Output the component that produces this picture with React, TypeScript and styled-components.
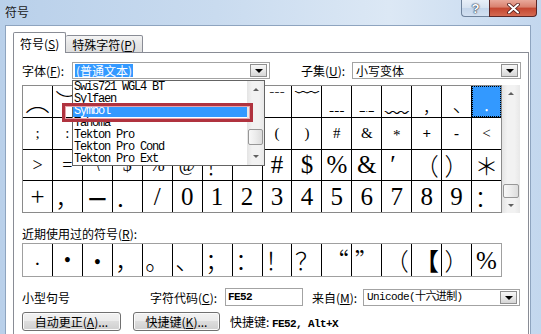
import styled, { createGlobalStyle } from "styled-components";

type Kind = "lg" | "md" | "sm" | "cjk" | "dash";
type Glyph = { t: string; k: Kind; h?: "flex-start" | "center" | "flex-end"; dy?: number; sel?: boolean; bold?: boolean };

const g = (t: string, k: Kind = "lg", extra: Partial<Glyph> = {}): Glyph => ({ t, k, ...extra });

const FAMILY: Record<Kind, string> = {
    lg: `"Liberation Serif", serif`,
    md: `"Liberation Serif", serif`,
    sm: `"Liberation Serif", serif`,
    cjk: `"Noto Sans CJK SC", sans-serif`,
    dash: `"Noto Sans CJK SC", sans-serif`,
};
const SIZE: Record<Kind, number> = { lg: 25, md: 18, sm: 15, cjk: 24, dash: 20 };

const SYMBOL_ROWS: Glyph[][] = [
    [
        g("︵", "cjk"), g("︶", "cjk"), g("﹃", "cjk"), g("﹄", "cjk"), g("﹅", "cjk"), g("﹆", "cjk"),
        g("﹇", "cjk"), g("﹈", "cjk"), g("﹉", "cjk"), g("﹋", "cjk"), g("﹍", "cjk"), g("﹎", "cjk"),
        g("﹏", "cjk"), g("﹐", "cjk"), g("﹑", "cjk"), g("﹒", "cjk", { sel: true }),
    ],
    [
        g(";", "sm"), g(":", "sm"), g("﹖", "sm"), g("﹗", "sm"), g("﹘", "sm"), g("﹛", "sm"),
        g("﹜", "sm"), g("﹝", "sm"), g("(", "sm"), g(")", "sm"), g("#", "sm"), g("&", "sm"),
        g("*", "sm", { dy: 5 }), g("+", "sm", { bold: true }), g("-", "sm", { bold: true }), g("<", "sm"),
    ],
    [
        g(">", "md"), g("=", "md"), g("\\", "md"), g("$", "md"), g("%", "md"), g("@", "md"),
        g("！", "cjk"), g(""), g("#"), g("$"), g("%"), g("&"),
        g("′", "lg", { h: "flex-start" }), g("（", "cjk"), g("）", "cjk"), g("＊", "cjk"),
    ],
    [
        g("+"), g("，", "cjk"), g("—", "dash", { bold: true }), g("．", "cjk"), g("/"),
        g("0"), g("1"), g("2"), g("3"), g("4"), g("5"), g("6"), g("7"), g("8"), g("9"),
        g("：", "cjk"),
    ],
];

const RECENT: Glyph[] = [
    g(".", "sm", { bold: true }), g("•", "md", { bold: true }), g("•", "md", { bold: true, dy: 4 }), g("，", "cjk"),
    g("。", "cjk"), g("、", "cjk"), g("；", "cjk"), g("：", "cjk"), g("！", "cjk"), g("？", "cjk"),
    g("“", "cjk"), g("”", "cjk"), g("（", "cjk"), g("【", "cjk", { bold: true }), g("）", "cjk"), g("%"),
];

const FONTS = ["Swis721 WGL4 BT", "Sylfaen", "Symbol", "Tahoma", "Tekton Pro", "Tekton Pro Cond", "Tekton Pro Ext"];

const GlobalStyle = createGlobalStyle`
    html, body { margin: 0; padding: 0; background: #fff; }
    body {
        font-family: "Noto Sans CJK SC", "Liberation Sans", sans-serif;
        font-size: 12px;
        color: #000;
    }
`;

const Window = styled.div`
    width: 541px;
    height: 334px;
    overflow: hidden;
    display: flex;
    flex-direction: column;
    background: linear-gradient(90deg, #b9d0ea 0%, #c9dbef 40%, #dce8f5 72%, #c3d7ee 100%);
`;

const TitleBar = styled.div`
    height: 25px;
    flex: none;
    display: flex;
    align-items: flex-start;
`;

const TitleText = styled.div`
    padding: 5px 0 0 5px;
    font-size: 12px;
    line-height: 14px;
    color: #1a1a1a;
`;

const Caption = styled.div`
    margin-left: auto;
    margin-right: 4px;
    display: flex;
`;

const HelpButton = styled.div`
    width: 28px;
    height: 17px;
    box-sizing: border-box;
    border: 1px solid #6f839c;
    border-top: none;
    border-right: none;
    border-radius: 0 0 0 4px;
    background: linear-gradient(#e8eff8, #d6e2f0 50%, #c4d5ea 51%, #d2e0f1);
    display: flex;
    align-items: center;
    justify-content: center;
    color: #fff;
    font: bold 13px "Liberation Sans", sans-serif;
    text-shadow: 0 0 1px #2d3d55, 0 0 1px #2d3d55, 0 0 2px #2d3d55;
`;

const CloseButton = styled.div`
    width: 48px;
    height: 17px;
    box-sizing: border-box;
    border: 1px solid #5a2626;
    border-top: none;
    border-radius: 0 0 4px 0;
    background: linear-gradient(#e9a99b, #d9806d 45%, #c4452f 50%, #d46a52);
    display: flex;
    align-items: center;
    justify-content: center;
`;

const Frame = styled.div`
    flex: 1;
    min-height: 0;
    display: flex;
    padding: 0 10px 0 5px;
`;

const Client = styled.div`
    flex: 1;
    min-height: 0;
    background: #fff;
    border: 1px solid #8ea4bf;
    border-bottom: none;
    padding: 6px 1px 0 7px;
    display: flex;
    flex-direction: column;
`;

const TabStrip = styled.div`
    display: flex;
    align-items: flex-end;
    height: 21px;
    margin-bottom: -1px;
    position: relative;
    z-index: 1;
`;

const Tab = styled.div<{ $active: boolean }>`
    height: ${({ $active }) => ($active ? 21 : 18)}px;
    box-sizing: border-box;
    padding: 0 6px;
    border: 1px solid #898c95;
    border-left: ${({ $active }) => ($active ? "1px solid #898c95" : "none")};
    border-bottom: ${({ $active }) => ($active ? "none" : "1px solid #898c95")};
    border-radius: 2px 2px 0 0;
    background: ${({ $active }) => ($active ? "#fff" : "linear-gradient(#f4f4f4, #e6e6e6 50%, #dedede)")};
    display: flex;
    align-items: center;
    font-size: 12px;
    white-space: nowrap;
`;

const Key = styled.span`
    text-decoration: underline;
`;

const Pane = styled.div`
    flex: 1;
    border: 1px solid #898c95;
    border-bottom: none;
    background: #fff;
    padding: 9px 7px 0 8px;
    display: flex;
    flex-direction: column;
`;

const FieldRow = styled.div<{ $h: number; $top: number }>`
    display: flex;
    align-items: center;
    height: ${({ $h }) => $h}px;
    margin-top: ${({ $top }) => $top}px;
    flex: none;
`;

const FieldLabel = styled.span<{ $w: number; $push?: boolean }>`
    width: ${({ $w }) => $w}px;
    flex: none;
    margin-left: ${({ $push }) => ($push ? "auto" : "0")};
    font-size: 12px;
    line-height: 17px;
    white-space: nowrap;
`;

const Combo = styled.div<{ $w: number }>`
    position: relative;
    width: ${({ $w }) => $w}px;
    height: 17px;
    box-sizing: border-box;
    flex: none;
    border: 1px solid #a3a3a3;
    background: #fff;
    display: flex;
    align-items: center;
    padding: 0 2px 0 2px;
`;

const ComboText = styled.span<{ $hl?: boolean; $mono?: boolean }>`
    padding: 0 1px;
    line-height: 13px;
    background: ${({ $hl }) => ($hl ? "#3399ff" : "transparent")};
    color: ${({ $hl }) => ($hl ? "#fff" : "#000")};
    font-family: ${({ $mono }) =>
        $mono ? `"Liberation Mono", "Noto Sans CJK SC", monospace` : `"Noto Sans CJK SC", sans-serif`};
    font-size: ${({ $mono }) => ($mono ? 11 : 12)}px;
    letter-spacing: ${({ $mono }) => ($mono ? "-0.6px" : "0")};
    white-space: nowrap;
`;

const DropButton = styled.span`
    margin-left: auto;
    width: 17px;
    height: 13px;
    box-sizing: border-box;
    border: 1px solid #8f8f8f;
    background: linear-gradient(#f7f7f7, #e8e8e8 50%, #d6d6d6);
    display: flex;
    align-items: center;
    justify-content: center;
    &::after {
        content: "";
        border-left: 4px solid transparent;
        border-right: 4px solid transparent;
        border-top: 4px solid #000;
        margin-top: 1px;
    }
`;

const DropList = styled.div`
    position: absolute;
    top: 17px;
    left: -1px;
    width: 193px;
    height: 86px;
    box-sizing: border-box;
    border: 1px solid #646464;
    background: #fff;
    z-index: 5;
    display: flex;
`;

const ListItems = styled.div`
    flex: 1;
    display: flex;
    flex-direction: column;
`;

const ListItem = styled.div<{ $sel: boolean }>`
    height: 12px;
    line-height: 12px;
    padding-left: 1px;
    font-family: "Liberation Mono", monospace;
    font-size: 12px;
    letter-spacing: -1.2px;
    white-space: nowrap;
    background: ${({ $sel }) => ($sel ? "#3399ff" : "transparent")};
    color: ${({ $sel }) => ($sel ? "#fff" : "#000")};
`;

const Annotation = styled.div`
    position: absolute;
    left: -11px;
    top: 22px;
    width: 191px;
    height: 19px;
    box-sizing: border-box;
    border: 3px solid #b0333f;
    box-shadow: inset 0 0 0 1px #e7a3aa;
    pointer-events: none;
`;

const ScrollBar = styled.div<{ $w: number }>`
    width: ${({ $w }) => $w}px;
    flex: none;
    background: linear-gradient(90deg, #e4e4e4, #f2f2f2 30%, #f2f2f2 70%, #e8e8e8);
    display: flex;
    flex-direction: column;
`;

const ScrollArrow = styled.div<{ $h: number; $down?: boolean }>`
    height: ${({ $h }) => $h}px;
    flex: none;
    display: flex;
    align-items: center;
    justify-content: center;
    &::after {
        content: "";
        border-left: 3px solid transparent;
        border-right: 3px solid transparent;
        ${({ $down }) => ($down ? "border-top: 3px solid #606060;" : "border-bottom: 3px solid #606060;")}
    }
`;

const ScrollGap = styled.div<{ $h?: number }>`
    height: ${({ $h }) => ($h ? `${$h}px` : "auto")};
    flex: ${({ $h }) => ($h ? "none" : "1")};
`;

const Thumb = styled.div<{ $h: number }>`
    height: ${({ $h }) => $h}px;
    flex: none;
    margin: 0 1px;
    box-sizing: border-box;
    border: 1px solid #979797;
    border-radius: 2px;
    background: linear-gradient(90deg, #f8f8f8, #ececec 50%, #dcdcdc);
`;

const GridRow = styled.div`
    display: flex;
    margin-top: 6px;
    flex: none;
`;

const SymGrid = styled.div<{ $rows: number; $h: number }>`
    width: 480px;
    height: ${({ $h }) => $h}px;
    box-sizing: border-box;
    display: grid;
    grid-template-columns: repeat(16, 1fr);
    grid-template-rows: repeat(${({ $rows }) => $rows}, 1fr);
    gap: 1px;
    background: #000;
    border: 1px solid #8a8a8a;
    flex: none;
`;

const Cell = styled.div<{ $k: Kind; $h: string; $dy: number; $sel: boolean; $bold: boolean }>`
    background: ${({ $sel }) => ($sel ? "#3399ff" : "#fff")};
    color: ${({ $sel }) => ($sel ? "#fff" : "#000")};
    outline: ${({ $sel }) => ($sel ? "1px dotted #000" : "none")};
    outline-offset: -1px;
    display: flex;
    align-items: center;
    justify-content: ${({ $h }) => $h};
    padding: ${({ $dy }) => $dy}px 0 0 ${({ $h }) => ($h === "flex-start" ? 8 : 0)}px;
    min-width: 0;
    line-height: 1;
    white-space: pre;
    font-family: ${({ $k }) => FAMILY[$k]};
    font-size: ${({ $k }) => SIZE[$k]}px;
    font-weight: ${({ $k, $bold }) => ($bold ? ($k === "dash" ? 900 : 700) : $k === "cjk" ? 300 : 400)};
`;

const RecentLabel = styled.div`
    margin-top: 14px;
    line-height: 13px;
    font-size: 12px;
    flex: none;
`;

const RecentGrid = styled(SymGrid)`
    margin-top: 3px;
    border-color: #a0a0a0;
`;

const CodeBox = styled.div<{ $w: number }>`
    width: ${({ $w }) => $w}px;
    height: 18px;
    box-sizing: border-box;
    flex: none;
    border: 1px solid #a3a3a3;
    padding-left: 2px;
    display: flex;
    align-items: center;
    font-family: "Liberation Mono", monospace;
    font-size: 11px;
    letter-spacing: -0.6px;
    font-weight: bold;
`;

const Button = styled.div<{ $w: number }>`
    width: ${({ $w }) => $w}px;
    height: 19px;
    box-sizing: border-box;
    flex: none;
    margin-right: ${({ $w }) => ($w > 90 ? 12 : 10)}px;
    border: 1px solid #707070;
    border-radius: 3px;
    background: linear-gradient(#f2f2f2, #ebebeb 45%, #dddddd 50%, #cfcfcf);
    box-shadow: inset 0 0 0 1px #fbfbfb;
    display: flex;
    align-items: center;
    justify-content: center;
    font-size: 12px;
    white-space: nowrap;
`;

const Shortcut = styled.span`
    font-size: 12px;
    white-space: nowrap;
`;

const MonoText = styled.span`
    font-family: "Liberation Mono", monospace;
    font-size: 11px;
    letter-spacing: -0.6px;
    font-weight: bold;
`;

function GlyphCell({ glyph }: { glyph: Glyph }) {
    return (
        <Cell
            $k={glyph.k}
            $h={glyph.h ?? "center"}
            $dy={glyph.dy ?? 0}
            $sel={!!glyph.sel}
            $bold={!!glyph.bold}
        >
            {glyph.t}
        </Cell>
    );
}

function CloseGlyph() {
    return (
        <svg width="13" height="11" viewBox="0 0 13 11">
            <path d="M2 1.5 L11 9.5 M11 1.5 L2 9.5" stroke="#4a1616" strokeWidth="3.6" strokeLinecap="round" />
            <path d="M2 1.5 L11 9.5 M11 1.5 L2 9.5" stroke="#fff" strokeWidth="2" strokeLinecap="round" />
        </svg>
    );
}

export default function App() {
    return (
        <>
            <GlobalStyle />
            <Window>
                <TitleBar>
                    <TitleText>符号</TitleText>
                    <Caption>
                        <HelpButton>?</HelpButton>
                        <CloseButton>
                            <CloseGlyph />
                        </CloseButton>
                    </Caption>
                </TitleBar>
                <Frame>
                    <Client>
                        <TabStrip>
                            <Tab $active>符号(<Key>S</Key>)</Tab>
                            <Tab $active={false}>特殊字符(<Key>P</Key>)</Tab>
                        </TabStrip>
                        <Pane>
                            <FieldRow $h={17} $top={0}>
                                <FieldLabel $w={50}>字体(<Key>F</Key>):</FieldLabel>
                                <Combo $w={198}>
                                    <ComboText $hl>(普通文本)</ComboText>
                                    <DropButton />
                                    <DropList>
                                        <ListItems>
                                            {FONTS.map((f) => (
                                                <ListItem key={f} $sel={f === "Symbol"}>{f}</ListItem>
                                            ))}
                                        </ListItems>
                                        <ScrollBar $w={17}>
                                            <ScrollArrow $h={17} />
                                            <ScrollGap $h={31} />
                                            <Thumb $h={16} />
                                            <ScrollGap />
                                            <ScrollArrow $h={17} $down />
                                        </ScrollBar>
                                        <Annotation />
                                    </DropList>
                                </Combo>
                                <FieldLabel $w={51} $push>子集(<Key>U</Key>):</FieldLabel>
                                <Combo $w={169}>
                                    <ComboText>小写变体</ComboText>
                                    <DropButton />
                                </Combo>
                            </FieldRow>
                            <GridRow>
                                <SymGrid $rows={4} $h={128}>
                                    {SYMBOL_ROWS.flat().map((glyph, i) => (
                                        <GlyphCell key={i} glyph={glyph} />
                                    ))}
                                </SymGrid>
                                <ScrollBar $w={18}>
                                    <ScrollArrow $h={17} />
                                    <ScrollGap />
                                    <Thumb $h={14} />
                                    <ScrollArrow $h={15} $down />
                                </ScrollBar>
                            </GridRow>
                            <RecentLabel>近期使用过的符号(<Key>R</Key>):</RecentLabel>
                            <RecentGrid $rows={1} $h={34}>
                                {RECENT.map((glyph, i) => (
                                    <GlyphCell key={i} glyph={glyph} />
                                ))}
                            </RecentGrid>
                            <FieldRow $h={18} $top={11}>
                                <FieldLabel $w={128}>小型句号</FieldLabel>
                                <FieldLabel $w={75}>字符代码(<Key>C</Key>):</FieldLabel>
                                <CodeBox $w={78}>FE52</CodeBox>
                                <FieldLabel $w={51} style={{ marginLeft: 9 }}>来自(<Key>M</Key>):</FieldLabel>
                                <Combo $w={157}>
                                    <ComboText $mono>Unicode(十六进制)</ComboText>
                                    <DropButton />
                                </Combo>
                            </FieldRow>
                            <FieldRow $h={19} $top={6}>
                                <Button $w={99}>自动更正(<Key>A</Key>)...</Button>
                                <Button $w={87}>快捷键(<Key>K</Key>)...</Button>
                                <Shortcut>
                                    快捷键: <MonoText>FE52, Alt+X</MonoText>
                                </Shortcut>
                            </FieldRow>
                        </Pane>
                    </Client>
                </Frame>
            </Window>
        </>
    );
}
